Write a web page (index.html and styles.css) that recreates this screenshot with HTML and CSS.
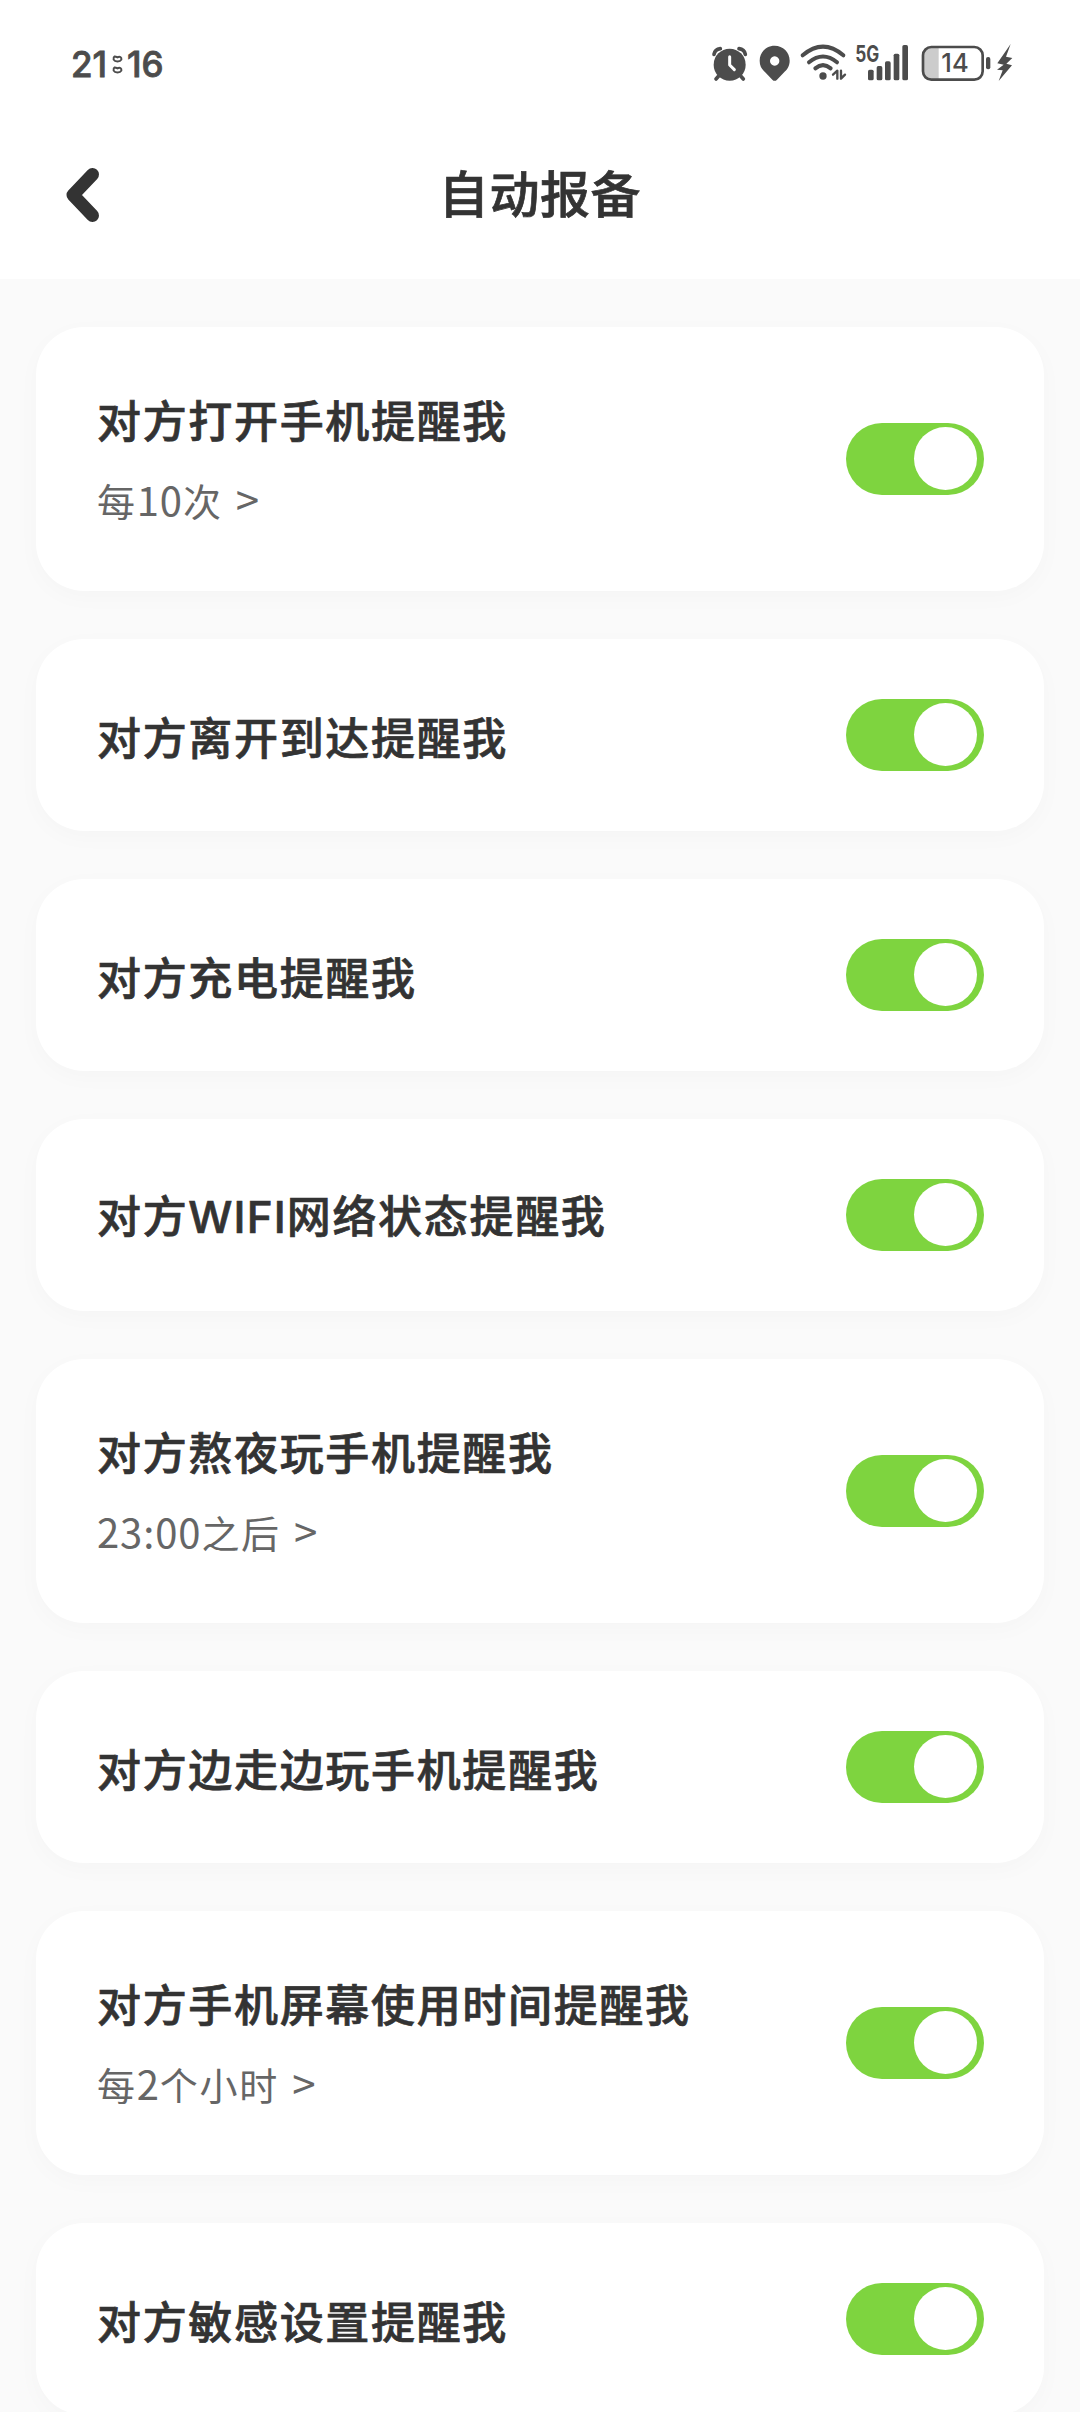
FILE: index.html
```html
<!DOCTYPE html>
<html lang="zh-CN">
<head>
<meta charset="UTF-8">
<meta name="viewport" content="width=device-width, initial-scale=1.0">
<title>自动报备</title>
<link rel="stylesheet" href="styles.css">
</head>
<body>
<div class="page">
	<header class="header">
		<div class="status">
			<div class="time">
				<span>21</span>
				<svg class="colon" viewBox="216 76 34 58"><path d="M224 80q4 0 9 3q5-3 9-1q4 3 3 8q-3 6-12 6t-12-6q-1-8 3-10zM224 114q4 0 9 3q5-3 9-1q4 3 3 8q-3 6-12 6t-12-6q-1-8 3-10z"/></svg>
				<span>16</span>
			</div>
			<div class="icons">
				<!-- 闹钟 -->
				<svg width="38" height="36" viewBox="63 45 114 108">
					<circle cx="119" cy="104" r="48"/>
					<path class="line" stroke-width="11" d="M72 73Q75 58 91 56M147 56Q163 58 166 73"/>
					<path class="line" stroke-width="11" d="M88 136L78 147M150 136L160 147"/>
					<path class="line white" stroke-width="9" d="M119 80V105L133 119"/>
				</svg>
				<!-- 定位 -->
				<svg width="34" height="36" viewBox="204 45 102 108">
					<path fill-rule="evenodd" d="M254 47C279 47 299 66 299 92C299 109 291 119 281 128L261 149Q254 156 247 149L227 128C216 118 209 109 209 92C209 66 229 47 254 47zM254 79a14 14 0 1 0 .1 0z"/>
				</svg>
				<!-- WIFI -->
				<svg width="45" height="36" viewBox="333 45 135 108">
					<path class="line" stroke-width="12" stroke-linecap="butt" d="M338 76Q399 24 460 76M357 97Q399 62 441 97M376 115Q399 96 422 115"/>
					<circle cx="399" cy="138" r="11"/>
					<path class="line" stroke-width="7" d="M429 134L442 122V146M453 122V146L465 134"/>
				</svg>
				<!-- 信号 -->
				<svg width="55" height="36" viewBox="495 45 165 108">
					<text class="net" x="496" y="96" textLength="72" lengthAdjust="spacingAndGlyphs">5G</text>
					<rect x="534" y="119" width="17" height="32" rx="5"/>
					<rect x="560" y="108" width="17" height="43" rx="5"/>
					<rect x="585" y="94" width="17" height="57" rx="5"/>
					<rect x="611" y="71" width="17" height="80" rx="5"/>
					<rect x="637" y="45" width="17" height="106" rx="5"/>
				</svg>
				<!-- 电量 -->
				<svg width="71" height="36" viewBox="687 45 213 108">
					<path class="level" d="M746 52H722Q701 52 701 73V126Q701 147 722 147H746z"/>
					<rect class="line" stroke-width="8" x="699" y="51" width="179" height="98" rx="25"/>
					<rect x="888" y="81" width="13" height="37" rx="6"/>
					<text class="percent" x="754" y="126" textLength="82" lengthAdjust="spacingAndGlyphs">14</text>
				</svg>
				<!-- 充电 -->
				<svg width="13" height="36" viewBox="927 45 39 108">
					<path d="M962 42L922 100L941 104L921 119L938 121L926 153L966 106L949 101L967 84L948 80z"/>
				</svg>
			</div>
		</div>
		<div class="nav">
			<svg class="back" width="36" height="56" viewBox="0 0 36 56"><path d="M28.500 7.500L9 28L28.500 48.500"/></svg>
			<h1>自动报备</h1>
		</div>
	</header>

	<ul class="list">
		<li class="card big">
			<div>
				<h2>对方打开手机提醒我</h2>
				<p>每<span class="num">10</span>次 <span class="gt">&gt;</span></p>
			</div>
			<i class="switch"></i>
		</li>
		<li class="card">
			<h2>对方离开到达提醒我</h2>
			<i class="switch"></i>
		</li>
		<li class="card">
			<h2>对方充电提醒我</h2>
			<i class="switch"></i>
		</li>
		<li class="card">
			<h2 class="wifi">对方<span class="en">WIFI</span>网络状态提醒我</h2>
			<i class="switch"></i>
		</li>
		<li class="card big">
			<div>
				<h2>对方熬夜玩手机提醒我</h2>
				<p><span class="num">23:00</span>之后 <span class="gt">&gt;</span></p>
			</div>
			<i class="switch"></i>
		</li>
		<li class="card">
			<h2>对方边走边玩手机提醒我</h2>
			<i class="switch"></i>
		</li>
		<li class="card big">
			<div>
				<h2>对方手机屏幕使用时间提醒我</h2>
				<p>每<span class="num">2</span>个小时 <span class="gt">&gt;</span></p>
			</div>
			<i class="switch"></i>
		</li>
		<li class="card">
			<h2>对方敏感设置提醒我</h2>
			<i class="switch"></i>
		</li>
	</ul>
</div>
</body>
</html>
```
FILE: styles.css
```css
* {box-sizing:border-box;margin:0;padding:0;}
body {background:#fafafa;color:#333;font-family:"Noto Sans CJK SC",sans-serif;}
ul {list-style:none;}
svg {display:block;overflow:visible;}
.page {height:2412px;overflow:hidden;}

/* 顶部 */
.header {height:279px;background:#fff;}
.status {display:flex;justify-content:space-between;padding:45px 68px 0 71px;height:111px;}
.time {display:flex;height:36px;line-height:38px;font-family:Inter,sans-serif;font-size:35px;font-weight:500;color:#4c4c4c;-webkit-text-stroke:.8px #4c4c4c;}
.colon {width:11px;height:19px;margin:10px 4px 0 5px;fill:none;stroke:#4c4c4c;stroke-width:6;}
.icons {display:flex;gap:9px;fill:#4c4c4c;}
.line {fill:none;stroke:#4c4c4c;stroke-linecap:round;stroke-linejoin:round;}
.white {stroke:#fff;}
.level {fill:#ccc;}
.net {font:700 68px Inter,sans-serif;}
.percent {font:500 78px Inter,sans-serif;}
.nav {display:flex;align-items:center;height:168px;padding:0 64px;}
.back {fill:none;stroke:#333;stroke-width:13;stroke-linecap:round;stroke-linejoin:round;}
.nav h1 {flex:1;padding:0 36px 9px 0;text-align:center;font-size:50px;line-height:72px;font-weight:500;letter-spacing:.6px;-webkit-text-stroke:.7px #333;}

/* 列表 */
.list {display:flex;flex-direction:column;gap:48px;padding:48px 36px 0;}
.card {display:flex;align-items:center;justify-content:space-between;height:192px;padding:0 60px 0 61px;border-radius:48px;background:#fff;box-shadow:0 6px 24px rgba(0,0,0,.025);flex-shrink:0;}
.card.big {height:264px;}
.card h2 {padding-top:2px;font-size:44px;line-height:66px;font-weight:500;letter-spacing:1.67px;white-space:nowrap;-webkit-text-stroke:.7px #333;}
.card h2.wifi {padding-top:0;}
.card.big h2 {padding-top:0;margin-top:-4px;}
.en {font-family:Inter,sans-serif;letter-spacing:1.1px;}
.card p {margin-top:19px;font-size:38px;line-height:56px;color:#666;letter-spacing:1.7px;}
.num {font-size:40px;letter-spacing:.9px;}
.gt {margin-left:3px;font-size:42px;line-height:50px;}
.switch {width:138px;height:72px;padding:4px 8px 4px 68px;border-radius:36px;background:#7ed43f;}
.switch::after {content:"";display:block;width:63px;height:63px;border-radius:50%;background:#fff;}
```
